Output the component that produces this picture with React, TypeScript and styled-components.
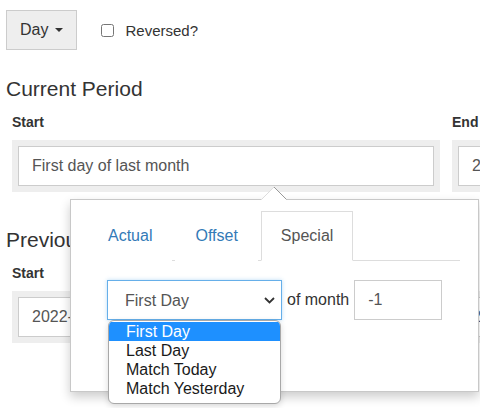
import React from 'react';
import styled, { createGlobalStyle } from 'styled-components';

const GlobalStyle = createGlobalStyle`
  html, body {
    margin: 0;
    padding: 0;
    overflow: hidden;
    background: #fff;
  }
  body {
    font-family: "Liberation Sans", Arial, sans-serif;
    color: #333;
  }
  * {
    box-sizing: border-box;
  }
`;

const Page = styled.div`
  position: relative;
  width: 480px;
  height: 408px;
  overflow: hidden;
  padding: 10px 0 0 6px;
`;

const Toolbar = styled.div`
  display: flex;
  align-items: center;
  height: 40px;
`;

const DayButton = styled.button`
  display: inline-flex;
  align-items: center;
  height: 40px;
  padding: 0 13px;
  border: 1px solid #ccc;
  background: #eee;
  color: #333;
  font: 16px "Liberation Sans", Arial, sans-serif;
  cursor: pointer;
`;

const Caret = styled.span`
  width: 0;
  height: 0;
  margin-left: 7px;
  border-top: 4px solid #333;
  border-left: 4px solid transparent;
  border-right: 4px solid transparent;
`;

const CheckLabel = styled.label`
  display: flex;
  align-items: center;
  margin-left: 24px;
  font-size: 15px;
  color: #333;
`;

const Checkbox = styled.input`
  width: 13px;
  height: 13px;
  margin: 0 11px 0 0;
`;

const Section = styled.section`
  margin-top: 27px;

  & + & {
    margin-top: 36px;
  }
`;

const Heading = styled.h2`
  margin: 0;
  font-size: 21px;
  line-height: 23px;
  font-weight: normal;
  color: #333;
`;

const Fields = styled.div`
  display: grid;
  grid-template-columns: 428px 428px;
  column-gap: 12px;
  margin: 12px 0 0 6px;
`;

const FieldLabel = styled.div`
  font-size: 14px;
  font-weight: bold;
  line-height: 20px;
  color: #333;
`;

const Well = styled.div`
  position: relative;
  margin-top: 8px;
  padding: 6px;
  background: #eee;
`;

const TextInput = styled.input`
  display: block;
  width: 100%;
  height: 40px;
  padding: 0 13px;
  border: 1px solid #ccc;
  border-radius: 0;
  background: #fff;
  color: #555;
  font: 16px "Liberation Sans", Arial, sans-serif;
  outline: none;
`;

const Popover = styled.div`
  position: absolute;
  top: calc(100% + 7px);
  left: 58px;
  z-index: 10;
  width: 409px;
  height: 193px;
  padding: 11px 18px 0 17px;
  background: #fff;
  border: 1px solid #c8c8c8;
  box-shadow: 0 5px 10px rgba(0, 0, 0, 0.2);
`;

const Arrow = styled.svg`
  position: absolute;
  top: -14px;
  left: 190px;
`;

const Tabs = styled.div`
  display: flex;
  border-bottom: 1px solid #ddd;
`;

const Tab = styled.a<{ $active?: boolean }>`
  display: block;
  margin: 0 3px -1px 0;
  padding: 14px 19px;
  line-height: 20px;
  font-size: 16px;
  text-decoration: none;
  cursor: pointer;
  border: 1px solid ${p => (p.$active ? '#ddd' : 'transparent')};
  border-bottom-color: transparent;
  background: #fff;
  color: ${p => (p.$active ? '#555' : '#337ab7')};
`;

const SpecialRow = styled.div`
  display: flex;
  align-items: center;
  gap: 5px;
  padding: 19px 0 0 19px;
`;

const SelectWrap = styled.div`
  position: relative;
  width: 175px;
  height: 40px;
`;

const Select = styled.select`
  appearance: none;
  width: 100%;
  height: 40px;
  padding: 0 0 0 17px;
  border: 1px solid #66afe9;
  border-radius: 0;
  background: #fff;
  color: #555;
  font: 16px "Liberation Sans", Arial, sans-serif;
  outline: none;
  box-shadow: 0 0 4px rgba(102, 175, 233, 0.45);
`;

const Chevron = styled.svg`
  position: absolute;
  top: 17px;
  right: 7px;
  pointer-events: none;
`;

const OptionList = styled.ul`
  position: absolute;
  top: 40px;
  left: 1px;
  z-index: 20;
  width: 173px;
  margin: 0;
  padding: 1px 0 5px;
  list-style: none;
  background: #fff;
  border: 1px solid #a8a8a8;
  border-radius: 6px;
  overflow: hidden;
  box-shadow: 0 2px 6px rgba(0, 0, 0, 0.15);
`;

const OptionItem = styled.li<{ $active?: boolean }>`
  padding-left: 17px;
  font-size: 16px;
  line-height: 19px;
  background: ${p => (p.$active ? '#1e90ff' : 'transparent')};
  color: ${p => (p.$active ? '#fff' : '#1a1a1a')};
`;

const InlineText = styled.span`
  font-size: 16px;
  color: #333;
`;

const OffsetInput = styled(TextInput)`
  width: 88px;
`;

const options = ['First Day', 'Last Day', 'Match Today', 'Match Yesterday'];

function SpecialPopover() {
  return (
    <Popover>
      <Arrow width="26" height="14" viewBox="0 0 26 14">
        <polygon points="0,14 13,0.8 26,14" fill="#fff" />
        <line x1="0.5" y1="13.5" x2="13" y2="1" stroke="#ddd" strokeWidth="1" />
        <line x1="13" y1="1" x2="25.5" y2="13.5" stroke="#999" strokeWidth="1" />
      </Arrow>
      <Tabs>
        <Tab>Actual</Tab>
        <Tab>Offset</Tab>
        <Tab $active>Special</Tab>
      </Tabs>
      <SpecialRow>
        <SelectWrap>
          <Select defaultValue="First Day">
            {options.map(o => (
              <option key={o}>{o}</option>
            ))}
          </Select>
          <Chevron width="11" height="7" viewBox="0 0 11 7">
            <polyline points="1,1 5.5,5.5 10,1" fill="none" stroke="#333" strokeWidth="1.8" />
          </Chevron>
          <OptionList>
            {options.map((o, i) => (
              <OptionItem key={o} $active={i === 0}>{o}</OptionItem>
            ))}
          </OptionList>
        </SelectWrap>
        <InlineText>of month</InlineText>
        <OffsetInput defaultValue="-1" />
      </SpecialRow>
    </Popover>
  );
}

export default function App() {
  return (
    <Page>
      <GlobalStyle />
      <Toolbar>
        <DayButton>
          Day
          <Caret />
        </DayButton>
        <CheckLabel>
          <Checkbox type="checkbox" />
          Reversed?
        </CheckLabel>
      </Toolbar>

      <Section>
        <Heading>Current Period</Heading>
        <Fields>
          <div>
            <FieldLabel>Start</FieldLabel>
            <Well>
              <TextInput defaultValue="First day of last month" />
              <SpecialPopover />
            </Well>
          </div>
          <div>
            <FieldLabel>End</FieldLabel>
            <Well>
              <TextInput defaultValue="2022-04-30" />
            </Well>
          </div>
        </Fields>
      </Section>

      <Section>
        <Heading>Previous Period</Heading>
        <Fields>
          <div>
            <FieldLabel>Start</FieldLabel>
            <Well>
              <TextInput defaultValue="2022-03-01" />
            </Well>
          </div>
          <div>
            <FieldLabel>End</FieldLabel>
            <Well>
              <TextInput defaultValue="2022-03-31" />
            </Well>
          </div>
        </Fields>
      </Section>
    </Page>
  );
}
